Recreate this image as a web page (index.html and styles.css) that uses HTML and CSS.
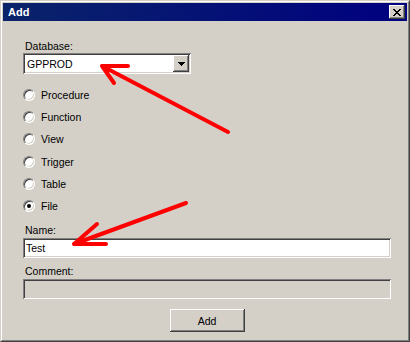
FILE: index.html
```html
<!DOCTYPE html>
<html lang="en">
<head>
  <meta charset="UTF-8" />
  <title>Add</title>
  <link rel="stylesheet" href="styles.css">
</head>
<body>
  <div class="window">
    <div class="frame">
      <div class="titlebar">
        <span class="title">Add</span>
        <span class="close">
          <svg width="8" height="7" viewBox="0 0 8 7">
            <path d="M0 0h2v1h-2zM6 0h2v1h-2zM1 1h2v1h-2zM5 1h2v1h-2zM2 2h4v1h-4zM3 3h2v1h-2zM2 4h4v1h-4zM1 5h2v1h-2zM5 5h2v1h-2zM0 6h2v1h-2zM6 6h2v1h-2z" fill="#000"/>
          </svg>
        </span>
      </div>

      <div class="content">
        <div class="label">Database:</div>
        <div class="combo">
          <span class="combo-text">GPPROD</span>
          <span class="combo-btn">
            <svg width="7" height="4" viewBox="0 0 7 4"><path d="M0 0h7v1h-7zM1 1h5v1h-5zM2 2h3v1h-3zM3 3h1v1h-1z" fill="#000"/></svg>
          </span>
        </div>

        <div class="radios">
          <div class="radio-row"><span class="radio"></span>Procedure</div>
          <div class="radio-row"><span class="radio"></span>Function</div>
          <div class="radio-row"><span class="radio"></span>View</div>
          <div class="radio-row"><span class="radio"></span>Trigger</div>
          <div class="radio-row"><span class="radio"></span>Table</div>
          <div class="radio-row"><span class="radio checked"></span>File</div>
        </div>

        <div class="label name-label">Name:</div>
        <div class="textbox">Test</div>

        <div class="label name-label">Comment:</div>
        <div class="textbox disabled"></div>

        <div class="actions">
          <span class="btn">Add</span>
        </div>
      </div>
    </div>

    <!-- red arrows drawn over the dialog -->
    <svg class="annot" width="410" height="342" viewBox="0 0 410 342">
      <g stroke="#ff0000" stroke-width="4" stroke-linecap="round" fill="none">
        <path d="M228 132L102 66M102 66H128M102 66L114 83"/>
        <path d="M186 203L74 244M74 244L97 224M74 244H106"/>
      </g>
    </svg>
  </div>
</body>
</html>
```

FILE: styles.css
```css
body {
  margin: 0;
  font-family: "Liberation Sans", Arial, sans-serif;
  font-size: 10.5px;
  color: #000;
}
.window {
  position: relative;
  width: 410px;
  height: 342px;
  box-sizing: border-box;
  background: #d4d0c8;
  border: 1px solid;
  border-color: #d4d0c8 #404040 #404040 #d4d0c8;
}
.frame {
  height: 100%;
  box-sizing: border-box;
  border: 1px solid;
  border-color: #fff #808080 #808080 #fff;
  padding: 1px;
}
.titlebar {
  height: 18px;
  display: flex;
  align-items: center;
  justify-content: space-between;
  padding: 0 2px 0 5px;
  background: linear-gradient(to right, #0a246a, #000080);
}
.title {
  color: #fff;
  font-weight: bold;
  font-size: 11px;
}
.close {
  width: 16px;
  height: 14px;
  box-sizing: border-box;
  display: flex;
  align-items: center;
  justify-content: center;
  background: #d4d0c8;
  box-shadow: inset -1px -1px #404040, inset 1px 1px #fff, inset -2px -2px #808080;
}
.content {
  padding: 19px 16px 0 20px;
}
.label {
  height: 13px;
  line-height: 13px;
  padding-left: 2px;
}
.name-label {
  margin-top: 7px;
  margin-bottom: 1px;
}
.combo {
  width: 168px;
  height: 21px;
  box-sizing: border-box;
  display: flex;
  align-items: center;
  justify-content: space-between;
  background: #fff;
  padding: 2px;
  box-shadow: inset 1px 1px #808080, inset -1px -1px #fff, inset 2px 2px #404040, inset -2px -2px #d4d0c8;
}
.combo-text {
  padding-left: 2px;
}
.combo-btn {
  width: 16px;
  height: 17px;
  box-sizing: border-box;
  display: flex;
  align-items: center;
  justify-content: center;
  background: #d4d0c8;
  box-shadow: inset -1px -1px #404040, inset 1px 1px #fff, inset -2px -2px #808080;
}
.radios {
  margin-top: 10px;
}
.radio-row {
  height: 22.2px;
  display: flex;
  align-items: center;
}
.radio {
  width: 12px;
  height: 12px;
  box-sizing: border-box;
  margin-right: 6px;
  border-radius: 50%;
  border: 1px solid;
  border-color: #808080 #fff #fff #808080;
  background: #fff;
  box-shadow: inset 1px 1px #404040, inset -1px -1px #d4d0c8;
  display: flex;
  align-items: center;
  justify-content: center;
}
.radio.checked::after {
  content: "";
  width: 4px;
  height: 4px;
  border-radius: 50%;
  background: #000;
}
.textbox {
  height: 20px;
  box-sizing: border-box;
  display: flex;
  align-items: center;
  padding-left: 3px;
  background: #fff;
  box-shadow: inset 1px 1px #808080, inset -1px -1px #fff, inset 2px 2px #404040, inset -2px -2px #d4d0c8;
}
.textbox.disabled {
  background: #d4d0c8;
}
.actions {
  display: flex;
  justify-content: center;
  margin-top: 10px;
}
.btn {
  width: 75px;
  height: 23px;
  box-sizing: border-box;
  display: flex;
  align-items: center;
  justify-content: center;
  background: #d4d0c8;
  box-shadow: inset -1px -1px #404040, inset 1px 1px #fff, inset -2px -2px #808080;
}
.annot {
  position: absolute;
  top: -1px;
  left: -1px;
  pointer-events: none;
}
```
